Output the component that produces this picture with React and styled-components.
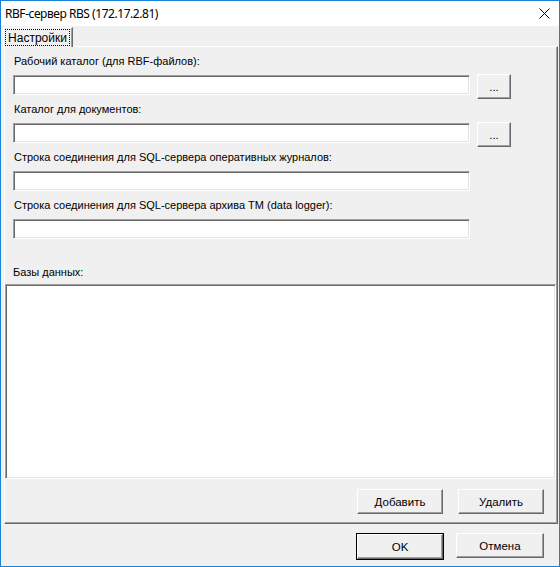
import React from "react";
import styled, { createGlobalStyle } from "styled-components";

const GlobalStyle = createGlobalStyle`
  html, body {
    margin: 0;
    padding: 0;
    background: #ffffff;
  }
  body {
    font-family: "Liberation Sans", Arial, sans-serif;
    font-size: 11px;
    color: #000;
  }
  * {
    box-sizing: border-box;
  }
`;

const Window = styled.div`
  width: 560px;
  height: 567px;
  border: 1px solid #1883d7;
  background: #f0f0f0;
  display: flex;
  flex-direction: column;
`;

const TitleBar = styled.div`
  height: 25px;
  background: #ffffff;
  display: flex;
  align-items: center;
  justify-content: space-between;
  padding: 0 9px 0 4px;
`;

const Title = styled.span`
  font-family: "Noto Sans", "Open Sans", sans-serif;
  font-size: 12px;
  letter-spacing: -0.45px;
`;

const CloseIcon = styled.svg`
  width: 11px;
  height: 11px;
  display: block;
`;

const TabStrip = styled.div`
  display: flex;
  padding: 1px 0 0 2px;
  position: relative;
  z-index: 1;
`;

const Tab = styled.div`
  width: 70px;
  height: 20px;
  background: #f0f0f0;
  border-top: 1px solid #ffffff;
  border-left: 1px solid #ffffff;
  border-right: 1px solid #696969;
  box-shadow: inset -1px 0 #a0a0a0;
  padding: 1px 2px 1px 1px;
`;

const TabFocus = styled.div`
  height: 100%;
  border: 1px dotted #000;
  display: flex;
  align-items: center;
  justify-content: center;
  font-size: 12px;
`;

const Panel = styled.div`
  margin: -1px 1px 0 3px;
  height: 478px;
  border-top: 1px solid #ffffff;
  border-left: 1px solid #ffffff;
  border-right: 1px solid #696969;
  border-bottom: 1px solid #696969;
  box-shadow: inset -1px -1px #a0a0a0;
  display: flex;
  flex-direction: column;
  padding: 8px 0 0 0;
`;

const Field = styled.div`
  display: flex;
  flex-direction: column;
  margin-bottom: 8px;
`;

const Label = styled.div`
  height: 13px;
  line-height: 13px;
  padding-left: ${(p) => p.$indent ?? 9}px;
  margin-bottom: ${(p) => p.$gap ?? 7}px;
  margin-top: ${(p) => p.$top ?? 0}px;
  white-space: nowrap;
`;

const Row = styled.div`
  display: flex;
  align-items: flex-start;
  gap: 7px;
  height: 20px;
  padding-left: 8px;
`;

const TextBox = styled.div`
  width: 457px;
  height: 20px;
  background: #ffffff;
  border-top: 1px solid #a0a0a0;
  border-left: 1px solid #a0a0a0;
  border-bottom: 1px solid #ffffff;
  border-right: 1px solid #ffffff;
  box-shadow: inset 1px 1px #696969, inset -1px -1px #e3e3e3;
`;

const Button = styled.button`
  width: ${(p) => p.$w}px;
  height: 25px;
  margin-top: ${(p) => p.$top ?? 0}px;
  padding: 0;
  background: #f0f0f0;
  font-family: "Liberation Sans", Arial, sans-serif;
  font-size: 11.5px;
  font-weight: 400;
  color: #000;
  border-top: 1px solid #ffffff;
  border-left: 1px solid #ffffff;
  border-right: 1px solid #696969;
  border-bottom: 1px solid #696969;
  box-shadow: inset -1px -1px #a0a0a0;
  display: flex;
  align-items: center;
  justify-content: center;
`;

const DefaultFrame = styled.div`
  border: 1px solid #000;
  display: flex;
`;

const ListBox = styled.div`
  height: 195px;
  margin-right: 1px;
  background: #ffffff;
  border-top: 1px solid #a0a0a0;
  border-left: 1px solid #a0a0a0;
  border-bottom: 1px solid #ffffff;
  border-right: 1px solid #ffffff;
  box-shadow: inset 1px 1px #696969, inset -1px -1px #e3e3e3;
`;

const ButtonRow = styled.div`
  display: flex;
  justify-content: flex-end;
  gap: ${(p) => p.$gap}px;
  padding: ${(p) => p.$pad};
`;

const fields = [
  { label: "Рабочий каталог (для RBF-файлов):", browse: true },
  { label: "Каталог для документов:", browse: true },
  { label: "Строка соединения для SQL-сервера оперативных журналов:" },
  { label: "Строка соединения для SQL-сервера архива ТМ (data logger):" },
];

const App = () => {
  return (
    <>
      <GlobalStyle />
      <Window>
        <TitleBar>
          <Title>RBF-сервер RBS (172.17.2.81)</Title>
          <CloseIcon viewBox="0 0 11 11">
            <path d="M0.5 0.5 L10.5 10.5 M10.5 0.5 L0.5 10.5" stroke="#000" strokeWidth="1" />
          </CloseIcon>
        </TitleBar>
        <TabStrip>
          <Tab>
            <TabFocus>Настройки</TabFocus>
          </Tab>
        </TabStrip>
        <Panel>
          {fields.map((f) => (
            <Field key={f.label}>
              <Label>{f.label}</Label>
              <Row>
                <TextBox />
                {f.browse && (
                  <Button $w={34} $top={-1}>
                    ...
                  </Button>
                )}
              </Row>
            </Field>
          ))}
          <Label $indent={8} $top={19} $gap={5}>
            Базы данных:
          </Label>
          <ListBox />
          <ButtonRow $gap={15} $pad="10px 13px 0 0">
            <Button $w={86}>Добавить</Button>
            <Button $w={86}>Удалить</Button>
          </ButtonRow>
        </Panel>
        <ButtonRow $gap={12} $pad="9px 15px 0 0">
          <DefaultFrame>
            <Button $w={86}>OK</Button>
          </DefaultFrame>
          <Button $w={88}>Отмена</Button>
        </ButtonRow>
      </Window>
    </>
  );
};

export default App;
